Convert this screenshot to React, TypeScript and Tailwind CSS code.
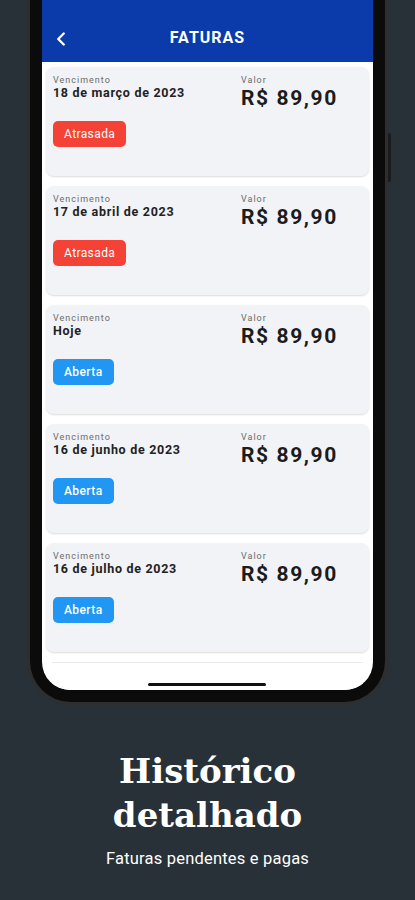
import { ChevronLeft } from "lucide-react";

type Fatura = {
  date: string;
  status: "Atrasada" | "Aberta";
};

const faturas: Fatura[] = [
  { date: "18 de março de 2023", status: "Atrasada" },
  { date: "17 de abril de 2023", status: "Atrasada" },
  { date: "Hoje", status: "Aberta" },
  { date: "16 de junho de 2023", status: "Aberta" },
  { date: "16 de julho de 2023", status: "Aberta" },
];

const FaturaCard = ({ fatura }: { fatura: Fatura }) => {
  const late = fatura.status === "Atrasada";
  return (
    <div className="h-[109px] shrink-0 rounded-[8px] bg-[#f2f3f6] shadow-[0_1px_2px_rgba(0,0,0,0.14)] pl-[7px] pt-[8px] grid grid-cols-[188px_1fr]">
      <div className="flex flex-col items-start">
        <span className="text-[9px] leading-[10px] tracking-[1px] text-[#6b6b6b]">Vencimento</span>
        <span className="text-[12.5px] leading-[15px] font-bold tracking-[0.7px] text-[#222]">{fatura.date}</span>
        <span
          className={
            late
              ? "mt-[21px] h-[26px] px-[11px] rounded-[5px] bg-[#f44336] text-white text-[12px] flex items-center tracking-[0.4px]"
              : "mt-[21px] h-[26px] px-[11px] rounded-[5px] bg-[#2196f3] text-white text-[12px] font-medium flex items-center tracking-[0.4px]"
          }
        >
          {fatura.status}
        </span>
      </div>
      <div className="flex flex-col">
        <span className="text-[9px] leading-[10px] tracking-[1px] text-[#6b6b6b]">Valor</span>
        <span className="text-[21px] leading-[26px] font-bold tracking-[1.6px] text-[#1c1c1c]">R$ 89,90</span>
      </div>
    </div>
  );
};

export default function App() {
  return (
    <div
      className="w-[415px] h-[900px] bg-[#283137] overflow-hidden flex flex-col"
      style={{ fontFamily: "Roboto, 'Noto Sans', sans-serif" }}
    >
      {/* phone */}
      <div className="relative ml-[27px] w-[361px] h-[705px] shrink-0 rounded-b-[44px] bg-[#2e2e2e] px-[3px] pb-[3px]">
        <div className="h-full rounded-b-[41px] bg-[#0b0b0b] px-[12px] pb-[12px]">
          <div className="relative h-full rounded-b-[28px] bg-white overflow-hidden flex flex-col">
            <div className="relative h-[62px] shrink-0 bg-[#0b3aab] flex items-center justify-center pt-[14px]">
              <ChevronLeft className="absolute left-[8px] top-[28px] text-white" size={22} strokeWidth={2.6} />
              <span className="text-white text-[16px] font-bold tracking-[1px]">FATURAS</span>
            </div>
            <div className="flex-1 min-h-0 overflow-hidden flex flex-col gap-[10px] px-[4px] pt-[5px]">
              {faturas.map((f, i) => (
                <FaturaCard key={i} fatura={f} />
              ))}
              <div className="h-[40px] shrink-0 mx-[6px] border-t border-[#ececec] bg-white" />
            </div>
            {/* home indicator */}
            <div className="absolute left-[106px] bottom-[4px] w-[118px] h-[3px] rounded-full bg-[#111]" />
          </div>
        </div>
        {/* side button */}
        <div className="absolute -right-[3px] top-[133px] w-[3px] h-[49px] rounded-r-[2px] bg-[#1b1b1b]" />
      </div>

      {/* caption */}
      <div className="flex flex-col items-center mt-[44px]">
        <h1
          className="text-white text-[34px] leading-[44px] font-bold text-center"
          style={{ fontFamily: "'DejaVu Serif', serif" }}
        >
          Histórico
          <br />
          detalhado
        </h1>
        <p className="mt-[12px] text-white text-[16.5px] leading-[20px] tracking-[0.2px]">Faturas pendentes e pagas</p>
      </div>
    </div>
  );
}
